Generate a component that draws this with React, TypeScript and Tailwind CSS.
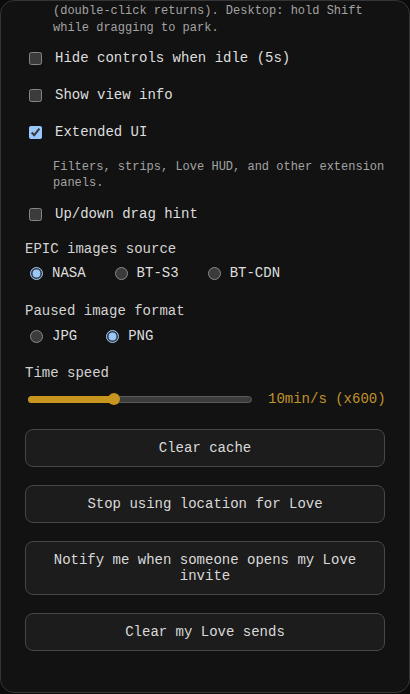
import { useState } from "react";

const mono = "font-['Liberation_Mono','Courier_New',monospace]";

const Check = ({ label, checked }: { label: string; checked?: boolean }) => (
  <label className="flex items-center h-5 text-[14px] leading-5 text-[#dedede]">
    <input type="checkbox" defaultChecked={checked} className="ml-1 w-[13px] h-[13px]" />
    <span className="ml-[13px]">{label}</span>
  </label>
);

const Radio = ({ name, options, value }: { name: string; options: string[]; value: string }) => (
  <div className="flex items-center h-5 text-[14px] leading-5 text-[#dedede]">
    {options.map((o) => (
      <label key={o} className="flex items-center mr-6">
        <input type="radio" name={name} defaultChecked={o === value} className="ml-[5px] w-[13px] h-[13px]" />
        <span className="ml-[9px]">{o}</span>
      </label>
    ))}
  </div>
);

const Btn = ({ children }: { children: React.ReactNode }) => (
  <button className="w-full rounded-lg border border-[#474747] bg-[#1c1c1c] px-4 py-[10px] text-[14px] leading-4 text-[#d9d9d9] text-center">
    {children}
  </button>
);

export default function App() {
  const [speed] = useState(38.4);

  return (
    <div className={`w-[410px] h-[694px] bg-[#0b0b0b] ${mono} [color-scheme:dark]`}>
      <div className="h-[693px] rounded-[14px] border border-[#353535] bg-[#121212] overflow-hidden px-6 pt-[2px] flex flex-col">
        <p className="ml-[28px] text-[12px] leading-[17px] text-[#a3a3a3]">
          (double-click returns). Desktop: hold Shift while dragging to park.
        </p>

        <div className="mt-[11px] flex flex-col gap-[17px]">
          <Check label="Hide controls when idle (5s)" />
          <Check label="Show view info" />
          <Check label="Extended UI" checked />
        </div>
        <p className="mt-[17px] ml-[28px] text-[12px] leading-4 text-[#a3a3a3]">
          Filters, strips, Love HUD, and other extension panels.
        </p>
        <div className="mt-[13px]">
          <Check label="Up/down drag hint" />
        </div>

        <div className="mt-[15px] text-[14px] leading-5 text-[#d2d2d2]">EPIC images source</div>
        <div className="mt-1">
          <Radio name="src" options={["NASA", "BT-S3", "BT-CDN"]} value="NASA" />
        </div>

        <div className="mt-[18px] text-[14px] leading-5 text-[#d2d2d2]">Paused image format</div>
        <div className="mt-[5px]">
          <Radio name="fmt" options={["JPG", "PNG"]} value="PNG" />
        </div>

        <div className="mt-[17px] text-[14px] leading-5 text-[#d2d2d2]">Time speed</div>
        <div className="mt-[6px] h-5 flex items-center gap-4 whitespace-nowrap">
          <div className="relative shrink-0 w-[224px] h-[7px] ml-[3px] rounded-full bg-[#3c3c3c] border border-[#5a5a5a]">
            <div className="absolute left-[-1px] top-[-1px] h-[7px] rounded-full bg-[#c8951e]" style={{ width: `${speed}%` }} />
            <div
              className="absolute top-1/2 -translate-y-1/2 -translate-x-1/2 w-[12px] h-[12px] rounded-full bg-[#c8951e]"
              style={{ left: `${speed}%` }}
            />
          </div>
          <span className="shrink-0 text-[14px] leading-5 text-[#c0922a]">10min/s (x600)</span>
        </div>

        <div className="mt-5 flex flex-col gap-[18px]">
          <Btn>Clear cache</Btn>
          <Btn>Stop using location for Love</Btn>
          <Btn>Notify me when someone opens my Love invite</Btn>
          <Btn>Clear my Love sends</Btn>
        </div>
      </div>
    </div>
  );
}
